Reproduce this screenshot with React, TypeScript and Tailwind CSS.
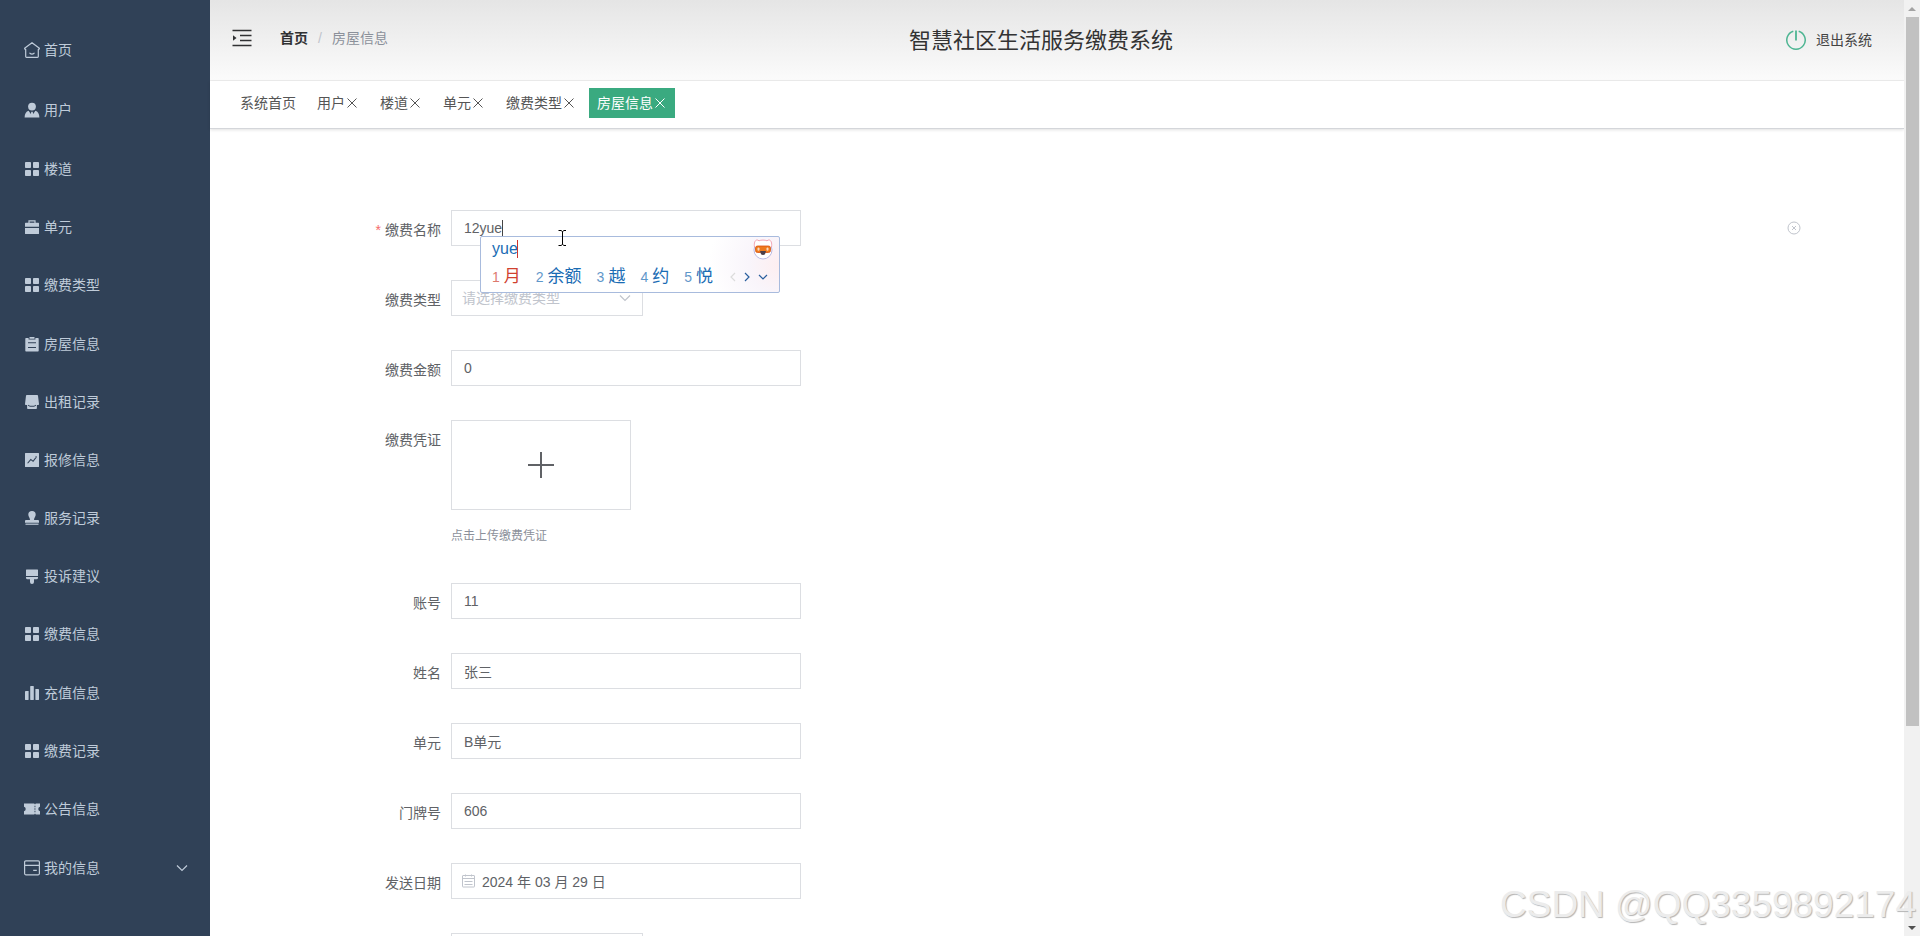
import React, { useState } from 'react';
import clsx from 'clsx';

type IconName =
    | 'home' | 'user' | 'menu' | 'suitcase' | 'order' | 'goods' | 'marketing'
    | 'check' | 'platform' | 'data' | 'ticket' | 'wallet';

interface MenuItem {
    label: string;
    icon: IconName;
    tall?: boolean;
    expandable?: boolean;
}

interface Field {
    id: string;
    label: string;
    value: string;
}

const MENU: MenuItem[] = [
    { label: '首页', icon: 'home', tall: true },
    { label: '用户', icon: 'user', tall: true },
    { label: '楼道', icon: 'menu' },
    { label: '单元', icon: 'suitcase' },
    { label: '缴费类型', icon: 'menu' },
    { label: '房屋信息', icon: 'order' },
    { label: '出租记录', icon: 'goods' },
    { label: '报修信息', icon: 'marketing' },
    { label: '服务记录', icon: 'check' },
    { label: '投诉建议', icon: 'platform' },
    { label: '缴费信息', icon: 'menu' },
    { label: '充值信息', icon: 'data' },
    { label: '缴费记录', icon: 'menu' },
    { label: '公告信息', icon: 'ticket' },
    { label: '我的信息', icon: 'wallet', tall: true, expandable: true },
];

const TABS = ['系统首页', '用户', '楼道', '单元', '缴费类型', '房屋信息'];

const CANDIDATES = ['月', '余额', '越', '约', '悦'];

const OWNER_FIELDS: Field[] = [
    { id: 'account', label: '账号', value: '11' },
    { id: 'realname', label: '姓名', value: '张三' },
    { id: 'unit', label: '单元', value: 'B单元' },
    { id: 'door', label: '门牌号', value: '606' },
];

const ICONS: Record<IconName, React.ReactNode> = {
    home: (
        <g fill="none" stroke="currentColor" strokeWidth="1.2" strokeLinejoin="round" strokeLinecap="round">
            <path d="M8 .7 15.4 6.200l-.4 1.200h-.7v7.200a.8.8 0 0 1-.8.800h-11a.8.8 0 0 1-.8-.8V7.400H1L.6 6.200z" />
            <path d="M5.900 11.200c1.200 1 3 1 4.200 0" />
        </g>
    ),
    user: (
        <>
            <circle cx="8" cy="4.600" r="3.900" />
            <path d="M4.600 8.800 6.800 12l.5-2.200h1.400l.5 2.200 2.200-3.200c2.400.6 4 3.300 4 6.700H.6c0-3.400 1.600-6.100 4-6.700z" />
            <path d="M6 13h4v2H6z" />
        </>
    ),
    menu: (
        <>
            <rect x="1" y="1" width="6" height="6" rx=".8" />
            <rect x="9" y="1" width="6" height="6" rx=".8" />
            <rect x="1" y="9" width="6" height="6" rx=".8" />
            <rect x="9" y="9" width="6" height="6" rx=".8" />
        </>
    ),
    suitcase: (
        <>
            <path d="M5 4V1.800h6V4" fill="none" stroke="currentColor" strokeWidth="1.200" />
            <path d="M1.600 3.800h12.800a.6.6 0 0 1 .6.600v3.400H1V4.400a.6.6 0 0 1 .6-.6z" />
            <path d="M1 9h14v5.400a.6.6 0 0 1-.6.600H1.600a.6.6 0 0 1-.6-.6z" />
        </>
    ),
    order: (
        <path
            fillRule="evenodd"
            d="M2 2h2.600v1.500h6.800V2H14a.7.7 0 0 1 .7.700v12a.7.7 0 0 1-.7.700H2a.7.7 0 0 1-.7-.7v-12A.7.7 0 0 1 2 2zM5.500.900h5v1.800h-5zM4 6.200v1h8v-1zM4 11v1h8v-1z"
        />
    ),
    goods: (
        <path
            fillRule="evenodd"
            d="M2.800 1h10.400a.8.8 0 0 1 .8.700l1 8.300a.8.8 0 0 1-.8.900h-1.300v3.300a.8.8 0 0 1-.8.800H3.900a.8.8 0 0 1-.8-.8v-3.300H1.800a.8.8 0 0 1-.8-.9l1-8.300A.8.8 0 0 1 2.800 1zM4 10.800v1l2 .9h4l2-.9v-1l-2 .9H6z"
        />
    ),
    marketing: (
        <path
            fillRule="evenodd"
            d="M1.500 1h13a.5.5 0 0 1 .5.500v13a.5.5 0 0 1-.5.500h-13a.5.5 0 0 1-.5-.5v-13a.5.5 0 0 1 .5-.5zM3.200 11l.8.600 2.900-3.400 2.300 1.900 3.300-4.400-.8-.6-2.700 3.500-2.300-1.900zM11.500 4.300h1.200v1.200h-1.200z"
        />
    ),
    check: (
        <>
            <path d="M8 1a3.700 3.700 0 0 1 3.700 3.700c0 2-1.700 2.700-1.700 5.300h4a1 1 0 0 1 1 1v1.700H1V11a1 1 0 0 1 1-1h4c0-2.600-1.700-3.300-1.700-5.300A3.700 3.700 0 0 1 8 1z" />
            <rect x="1.500" y="13.600" width="13" height="1.200" />
        </>
    ),
    platform: (
        <>
            <path d="M2.500 1.500h11a.5.5 0 0 1 .5.500v6H2V2a.5.5 0 0 1 .5-.5z" />
            <path d="M2 9h12v.8a1.500 1.500 0 0 1-1.500 1.500H10V14a2 2 0 0 1-4 0v-2.700H3.500A1.500 1.500 0 0 1 2 9.800z" />
        </>
    ),
    data: (
        <>
            <rect x="1" y="6" width="3.600" height="9" rx=".4" />
            <rect x="6.200" y="1" width="3.600" height="14" rx=".4" />
            <rect x="11.400" y="4" width="3.600" height="11" rx=".4" />
        </>
    ),
    ticket: (
        <path
            fillRule="evenodd"
            d="M0 2.500h10.200l.8.900.8-.9H16v3.200a2.400 2.400 0 0 0 0 4.600v3.200h-4.200l-.8-.9-.8.900H0v-3.200a2.400 2.400 0 0 0 0-4.600zM10.500 4.800v1.500h.9V4.800zM10.500 7.300v1.500h.9V7.300zM10.500 9.800v1.500h.9V9.800z"
        />
    ),
    wallet: (
        <g fill="none" stroke="currentColor" strokeWidth="1.200">
            <rect x=".6" y=".8" width="14.800" height="14" rx="1.200" />
            <path d="M.6 5.300h14.800M9.200 10.300h3.600" />
        </g>
    ),
};

function MenuIcon({ name }: { name: IconName }) {
    return (
        <svg viewBox="0 0 16 16" className="size-4 shrink-0" fill="currentColor" aria-hidden="true">
            {ICONS[name]}
        </svg>
    );
}

function Chevron({ className }: { className?: string }) {
    return (
        <svg viewBox="0 0 12 12" className={clsx('size-3', className)} fill="none" stroke="currentColor" strokeWidth="1.2" aria-hidden="true">
            <path d="M1 3.500 6 8.500l5-5" />
        </svg>
    );
}

function Sidebar() {
    return (
        <nav className="flex w-[210px] shrink-0 flex-col bg-[#304157] pt-5 pb-[38px] text-sm text-[#bfcbd9]">
            {MENU.map((item, i) => (
                <a
                    key={i}
                    href="#"
                    className={clsx('flex items-center gap-1 pr-[22px] pl-6', item.tall ? 'h-[60px]' : 'flex-1')}
                >
                    <MenuIcon name={item.icon} />
                    <span>{item.label}</span>
                    {item.expandable && <Chevron className="ml-auto" />}
                </a>
            ))}
        </nav>
    );
}

function Header() {
    return (
        <header className="grid h-[81px] shrink-0 grid-cols-[1fr_auto_1fr] items-center border-b border-[#eeeeee] bg-linear-to-b from-[#e5e5e5] to-[#fbfbfb] pr-8 text-sm">
            <div className="flex items-center pb-1 pl-[22px]">
                <button type="button" aria-label="折叠菜单">
                    <svg viewBox="0 0 20 18" className="h-[18px] w-5" fill="none" stroke="#303133" strokeWidth="1.300" aria-hidden="true">
                        <path d="M.5 1.500h19M8 6.500h11.500M8 11.500h11.500M.5 16.500h19" />
                        <path d="M1 6.200 4.500 9 1 11.800z" fill="#303133" stroke="none" />
                    </svg>
                </button>
                <a href="#" className="ml-7 font-bold text-[#303133]">首页</a>
                <span className="mx-[10px] text-[#c0c4cc]">/</span>
                <span className="text-[#8b909a]">房屋信息</span>
            </div>
            <h1 className="pt-[2px] text-[22px] leading-8 text-[#333333]">智慧社区生活服务缴费系统</h1>
            <button type="button" className="flex items-center gap-[10px] justify-self-end text-[#444444]">
                <svg viewBox="0 0 20 20" className="size-5" fill="none" stroke="#4db592" strokeWidth="1.500" aria-hidden="true">
                    <path d="M7.300 1.200a9.200 9.200 0 1 0 5.400 0" />
                    <path d="M10 .5v10" strokeWidth="1.800" />
                </svg>
                退出系统
            </button>
        </header>
    );
}

function TabBar({ active, onChange }: { active: string; onChange: (tab: string) => void }) {
    return (
        <div className="flex h-12 shrink-0 items-center gap-[5px] border-b border-[#d4d6da] bg-white pb-1 pl-[22px] text-sm shadow-[0_1px_3px_rgba(0,0,0,0.12)]">
            {TABS.map((tab, i) => (
                <button
                    key={tab}
                    type="button"
                    onClick={() => onChange(tab)}
                    className={clsx(
                        'flex h-[30px] items-center px-2',
                        tab === active ? 'bg-[#3aaa80] text-white' : 'text-[#555555]'
                    )}
                >
                    {tab}
                    {i > 0 && (
                        <svg viewBox="0 0 14 14" className="size-[14px]" fill="none" stroke="currentColor" aria-hidden="true">
                            <path d="m2.500 2.500 9 9M11.500 2.500l-9 9" />
                        </svg>
                    )}
                </button>
            ))}
        </div>
    );
}

function FormRow({ id, label, required, children }: {
    id: string;
    label: string;
    required?: boolean;
    children: React.ReactNode;
}) {
    return (
        <div className="mb-[30px] flex min-h-10 items-start">
            <label htmlFor={id} className="w-[120px] shrink-0 pr-[10px] text-right leading-10">
                {required && <span className="mr-1 text-[#f56c6c]">*</span>}
                {label}
            </label>
            {children}
        </div>
    );
}

const boxClass = 'h-9 border border-[#dcdee2] bg-white text-sm text-[#606266] outline-none';

// Input method candidates, floating over the field being typed in
function ImePopup() {
    return (
        <div className="absolute top-[26px] left-[29px] z-10 h-[57px] w-[300px] rounded-xs border border-[#a8bbdd] bg-white bg-[radial-gradient(circle_at_100%_50%,#fdeef0_0,#f9f5fb_30px,#ffffff_70px)] pl-[11px] text-[#1a6cb4]">
            <div className="flex h-7 items-center pb-1 text-base leading-5">
                yue
                <span className="-ml-px h-[18px] w-px bg-[#d0342c]" />
            </div>
            <div className="flex items-center gap-[15px] leading-6">
                {CANDIDATES.map((word, i) => (
                    <span key={word} className={clsx('flex items-center gap-1', i === 0 && 'text-[#d0412f]')}>
                        <span className="text-sm opacity-70">{i + 1}</span>
                        <span className="text-[17px] leading-6">{word}</span>
                    </span>
                ))}
                <svg viewBox="0 0 42 12" className="h-3 w-[42px]" fill="none" stroke="#2a5f9e" strokeWidth="1.200" aria-hidden="true">
                    <path d="M7 2 3 6l4 4" stroke="#dcdcdc" />
                    <path d="m17 2 4 4-4 4" />
                    <path d="m31 4 4 4 4-4" />
                </svg>
            </div>
            <svg viewBox="0 0 20 22" className="absolute top-px right-[6px] h-[22px] w-5" aria-hidden="true">
                <circle cx="10" cy="12" r="9" fill="#fff" stroke="#b9b9e2" />
                <path d="M1.500 9C.5 3 3.500.500 6 2.800c2-1 6-1 8 0C16.500.500 19.500 3 18.500 9" fill="#fff" stroke="#f3a6b4" />
                <rect x="2.500" y="8" width="15" height="6.500" rx="2" fill="#ee7a1c" stroke="#d9520f" strokeWidth=".8" />
                <rect x="4.500" y="9.500" width="2" height="3.200" rx="1" fill="#fbd9bd" />
                <rect x="13.500" y="9.500" width="2" height="3.200" rx="1" fill="#fbd9bd" />
                <path d="M7 13h6l-1 3.200c-1 1-3 1-4 0z" fill="#4a3f4a" />
            </svg>
        </div>
    );
}

function PaymentForm() {
    const [name, setName] = useState('12yue');

    return (
        <form className="pt-[81px] pr-[103px] pl-[121px] text-sm text-[#606266]">
            <FormRow id="name" label="缴费名称" required>
                <div className="relative w-[350px]">
                    <input
                        id="name"
                        value={name}
                        onChange={(e) => setName(e.target.value)}
                        className={clsx(boxClass, 'w-full px-3')}
                    />
                    <span className="absolute top-[10px] left-[51px] h-4 w-px bg-[#444444]" />
                    <ImePopup />
                    <svg viewBox="0 0 8 18" className="absolute top-[19px] left-[107px] z-20 h-[18px] w-2" fill="none" stroke="#000" aria-hidden="true">
                        <path d="M.5 1.500h2.500l1.500 1 1.500-1h2M4.500 2.500v13M.5 16.500h2.500l1.500-1 1.500 1h2" />
                    </svg>
                </div>
                <button type="button" aria-label="清空" className="ml-auto flex h-9 items-center">
                    <svg viewBox="0 0 14 14" className="size-[14px]" fill="none" stroke="#c0c4cc" aria-hidden="true">
                        <circle cx="7" cy="7" r="6" />
                        <path d="m5 5 4 4M9 5 5 9" />
                    </svg>
                </button>
            </FormRow>

            <FormRow id="type" label="缴费类型">
                <div className="relative w-[192px]">
                    <select id="type" className={clsx(boxClass, 'w-full appearance-none px-[10px] text-[#c0c4cc]')}>
                        <option>请选择缴费类型</option>
                    </select>
                    <Chevron className="pointer-events-none absolute top-3 right-3 text-[#c0c4cc]" />
                </div>
            </FormRow>

            <FormRow id="amount" label="缴费金额">
                <input id="amount" defaultValue="0" className={clsx(boxClass, 'w-[350px] px-3')} />
            </FormRow>

            <FormRow id="voucher" label="缴费凭证">
                <div className="pb-[7px]">
                    <button
                        id="voucher"
                        type="button"
                        className="flex h-[90px] w-[180px] items-center justify-center border border-[#dcdee2]"
                    >
                        <svg viewBox="0 0 26 26" className="size-[26px]" stroke="#606266" strokeWidth="2" aria-hidden="true">
                            <path d="M13 0v26M0 13h26" />
                        </svg>
                    </button>
                    <p className="mt-4 text-xs leading-5 text-[#8b909a]">点击上传缴费凭证</p>
                </div>
            </FormRow>

            {OWNER_FIELDS.map((field) => (
                <FormRow key={field.id} id={field.id} label={field.label}>
                    <input id={field.id} defaultValue={field.value} className={clsx(boxClass, 'w-[350px] px-3')} />
                </FormRow>
            ))}

            <FormRow id="date" label="发送日期">
                <div className="relative w-[350px]">
                    <input id="date" defaultValue="2024 年 03 月 29 日" className={clsx(boxClass, 'w-full pr-3 pl-[30px]')} />
                    <svg viewBox="0 0 14 14" className="absolute top-[11px] left-[11px] size-[14px]" fill="none" stroke="#c0c4cc" aria-hidden="true">
                        <rect x=".5" y="1.500" width="12" height="11.500" rx=".5" />
                        <path d="M.5 4.500h12M3.500.5v2M9.500.5v2M2.500 7.500h8M2.500 10.500h8" />
                    </svg>
                </div>
            </FormRow>

            <FormRow id="paid" label="">
                <select id="paid" className={clsx(boxClass, 'w-[192px] appearance-none px-[10px]')} />
            </FormRow>
        </form>
    );
}

function ScrollBar() {
    return (
        <div className="flex w-4 shrink-0 flex-col items-center bg-[#f1f1f1]">
            <svg viewBox="0 0 16 17" className="h-[17px] w-4 shrink-0" fill="#a3a3a3" aria-hidden="true">
                <path d="M8 7l4 4H4z" />
            </svg>
            <div className="w-[13px] flex-[709] bg-[#c1c1c1]" />
            <div className="flex-[193]" />
            <svg viewBox="0 0 16 17" className="h-[17px] w-4 shrink-0" fill="#505050" aria-hidden="true">
                <path d="M4 7h8l-4 4z" />
            </svg>
        </div>
    );
}

export default function App() {
    const [activeTab, setActiveTab] = useState('房屋信息');

    return (
        <div className="relative flex h-screen overflow-hidden bg-white font-['Liberation_Sans','Noto_Sans_CJK_SC',sans-serif]">
            <Sidebar />
            <div className="flex min-w-0 flex-1 flex-col">
                <Header />
                <TabBar active={activeTab} onChange={setActiveTab} />
                <main className="min-h-0 flex-1 overflow-hidden">
                    <PaymentForm />
                </main>
            </div>
            <ScrollBar />
            <div className="pointer-events-none absolute right-1 bottom-[7px] z-30 text-[37px] leading-12 text-[#ececec] [text-shadow:1px_1px_1px_#b4b4b4]">
                CSDN @QQ3359892174
            </div>
        </div>
    );
}
